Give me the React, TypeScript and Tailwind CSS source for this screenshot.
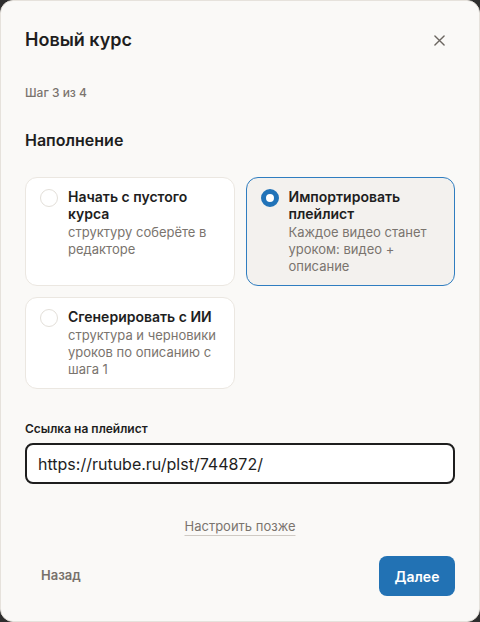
import React from "react";

function Radio({ checked }: { checked?: boolean }) {
  return checked ? (
    <span className="box-border block h-[18px] w-[18px] shrink-0 rounded-full border-[5px] border-[#2173b8] bg-white" />
  ) : (
    <span className="box-border block h-[18px] w-[18px] shrink-0 rounded-full border-[1.5px] border-[#e3dfd9] bg-white" />
  );
}

function Card({
  title,
  desc,
  checked,
}: {
  title: string;
  desc: string;
  checked?: boolean;
}) {
  return (
    <div
      className={
        checked
          ? "flex gap-[10px] rounded-[12px] border border-[#2f7dc0] bg-[#f3f1ee] px-[14px] py-[10px]"
          : "flex gap-[10px] rounded-[12px] border border-[#ebe7e1] bg-white px-[14px] py-[10px]"
      }
    >
      <div className="pt-[1px]">
        <Radio checked={checked} />
      </div>
      <div className="flex flex-col">
        <div className="text-[14px] font-semibold leading-[17px] text-[#1e1e1e]">{title}</div>
        <div className="mt-[2px] text-[13px] leading-[17px] text-[#7a746e]">{desc}</div>
      </div>
    </div>
  );
}

export default function App() {
  return (
    <div className="h-[622px] w-[480px] bg-[#2e2e2e]" style={{ fontFamily: "Inter, 'Noto Sans', sans-serif" }}>
      <div className="box-border flex h-[622px] w-[480px] flex-col rounded-[13px] border border-[#e6e2dc] bg-[#faf9f7] px-6">
        <div className="mt-[27px] flex items-center justify-between">
          <h1 className="text-[18px] font-semibold leading-[24px] text-[#1e1e1e]">Новый курс</h1>
          <svg width="11" height="11" viewBox="0 0 12 12" className="mr-[10px]">
            <path d="M1 1L11 11M11 1L1 11" stroke="#6b6660" strokeWidth="1.5" strokeLinecap="round" />
          </svg>
        </div>
        <div className="mt-[33px] text-[12px] font-medium leading-[16px] text-[#7a746e]">Шаг 3 из 4</div>
        <h2 className="mt-[29px] text-[16px] font-semibold leading-[20px] text-[#1e1e1e]">Наполнение</h2>
        <div className="mt-[27px] grid grid-cols-2 gap-[11px]">
          <Card title="Начать с пустого курса" desc="структуру соберёте в редакторе" />
          <Card checked title="Импортировать плейлист" desc="Каждое видео станет уроком: видео + описание" />
          <Card title="Сгенерировать с ИИ" desc="структура и черновики уроков по описанию с шага 1" />
        </div>
        <label className="mt-[32px] text-[12px] font-semibold leading-[16px] text-[#1e1e1e]">Ссылка на плейлист</label>
        <div className="mt-[6px] flex h-[41px] items-center rounded-[8px] border-2 border-[#1e1e1e] bg-white px-[11px] text-[16px] text-[#1e1e1e]">
          https://rutube.ru/plst/744872/
        </div>
        <div className="mt-[33px] flex justify-center">
          <span className="text-[13px] leading-[18px] text-[#7a746e] underline decoration-[#cfcac4] underline-offset-[4px]">
            Настроить позже
          </span>
        </div>
        <div className="mt-[21px] flex items-center justify-between">
          <span className="pl-[16px] text-[13px] font-semibold text-[#77716b]">Назад</span>
          <button className="h-[40px] w-[76px] rounded-[8px] bg-[#2272b4] text-[14px] font-semibold text-white">Далее</button>
        </div>
      </div>
    </div>
  );
}
